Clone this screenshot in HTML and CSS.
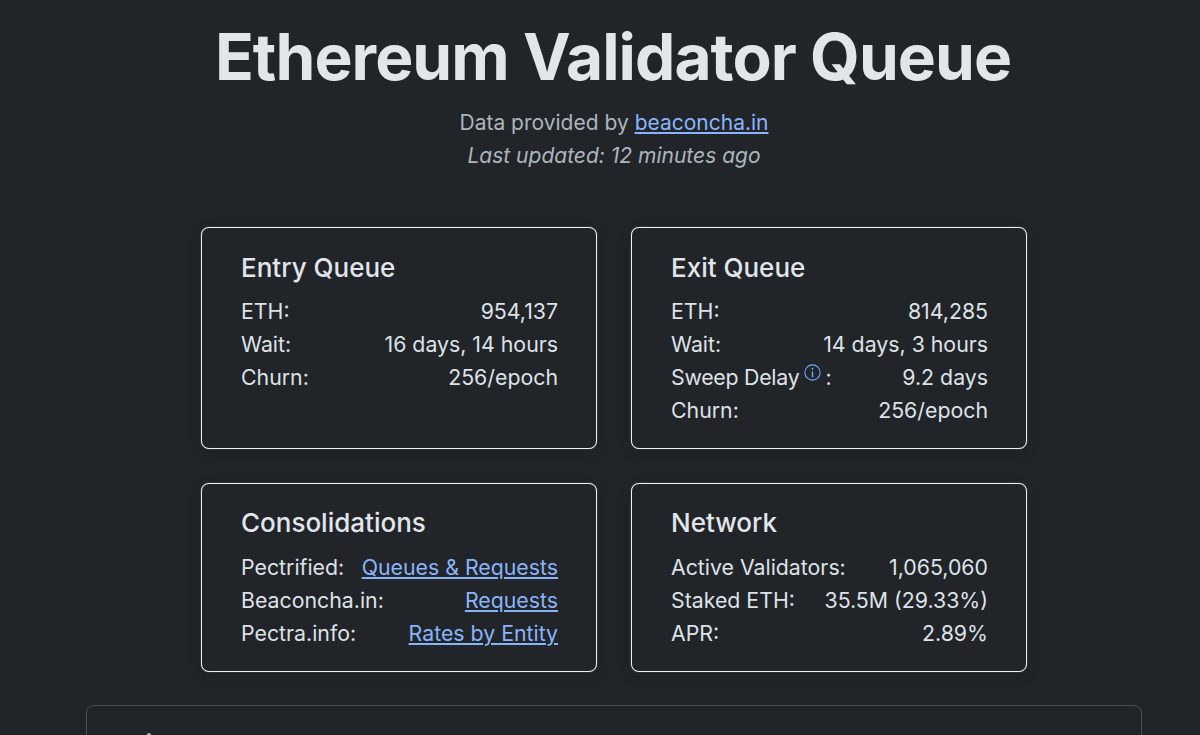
FILE: index.html
```html
<!DOCTYPE html>
<html lang="en">
<head>
<meta charset="utf-8">
<title>Ethereum Validator Queue</title>
<link rel="stylesheet" href="styles.css">
</head>
<body>
<main class="page">
  <header class="header">
    <h1 class="title">Ethereum Validator Queue</h1>
    <p class="source">Data provided by <a href="#">beaconcha.in</a></p>
    <p class="updated">Last updated: 12 minutes ago</p>
  </header>
  <section class="cards">
    <article class="card">
      <h2 class="card-title">Entry Queue</h2>
      <div class="row"><span>ETH:</span><span>954,137</span></div>
      <div class="row"><span>Wait:</span><span>16 days, 14 hours</span></div>
      <div class="row"><span>Churn:</span><span>256/epoch</span></div>
    </article>
    <article class="card">
      <h2 class="card-title">Exit Queue</h2>
      <div class="row"><span>ETH:</span><span>814,285</span></div>
      <div class="row"><span>Wait:</span><span>14 days, 3 hours</span></div>
      <div class="row"><span><span class="tight">Sweep Delay</span> <svg class="info" viewBox="0 0 16 16" width="17" height="17" aria-hidden="true"><circle cx="8" cy="8" r="7.2" fill="none" stroke="currentColor" stroke-width="1"/><circle cx="8" cy="4.4" r="0.9" fill="currentColor"/><path d="M8 7v5.6" stroke="currentColor" stroke-width="1.3" fill="none"/></svg> :</span><span>9.2 days</span></div>
      <div class="row"><span>Churn:</span><span>256/epoch</span></div>
    </article>
    <article class="card card-lower">
      <h2 class="card-title">Consolidations</h2>
      <div class="row"><span>Pectrified:</span><a href="#">Queues &amp; Requests</a></div>
      <div class="row"><span>Beaconcha.in:</span><a href="#">Requests</a></div>
      <div class="row"><span>Pectra.info:</span><a href="#">Rates by Entity</a></div>
    </article>
    <article class="card card-lower">
      <h2 class="card-title">Network</h2>
      <div class="row"><span>Active Validators:</span><span>1,065,060</span></div>
      <div class="row"><span>Staked ETH:</span><span>35.5M (29.33%)</span></div>
      <div class="row"><span>APR:</span><span>2.89%</span></div>
    </article>
  </section>
  <section class="panel"><span class="panel-mark"></span></section>
</main>
</body>
</html>
```
FILE: styles.css
```css
* { box-sizing: border-box; }
html, body { margin: 0; height: 735px; overflow: hidden; }
body {
  background: #212529;
  color: #dee2e6;
  font-family: Inter, "Liberation Sans", sans-serif;
}
a { color: #8ab4f8; text-decoration: underline; text-underline-offset: 2px; }
.page { width: 1056px; margin-left: 86px; }
.header { text-align: center; }
.title {
  margin: 0;
  padding: 17px 2px 0 0;
  font-size: 64px;
  line-height: 80px;
  font-weight: 700;
  letter-spacing: -0.94px;
  color: #e2e6ea;
}
.source, .updated { margin: 0; font-size: 21px; line-height: 33px; color: #adb5bd; }
.source { margin-top: 9px; }
.updated { font-style: italic; }
.cards {
  display: grid;
  grid-template-columns: 396px 396px;
  justify-content: center;
  gap: 34px;
  margin-top: 55px;
}
.card {
  border: 1px solid #eceef0;
  border-radius: 8px;
  padding: 22px 38px 21px 39px;
  box-shadow: 0 0 1px rgba(255, 255, 255, 0.7), 0 4px 16px rgba(0, 0, 0, 0.12);
  background: #212529;
}
.card-title { margin: 0 0 10px; font-size: 26px; line-height: 35px; font-weight: 500; color: #e2e6ea; }
.card-lower { padding-top: 21px; padding-bottom: 21px; }
.card-lower .card-title { margin-bottom: 11px; }
.row { display: flex; justify-content: space-between; font-size: 21.3px; line-height: 33px; }
.tight { letter-spacing: -0.25px; }
.info { color: #6ea8fe; vertical-align: 4px; margin-left: -1px; margin-right: -2px; }
.panel {
  margin-top: 33px;
  height: 120px;
  border: 1px solid #495057;
  border-radius: 8px;
  padding: 27px 60px;
}
.panel-mark { display: block; width: 4px; height: 4px; background: #adb5bd; border-radius: 50%; }
```
